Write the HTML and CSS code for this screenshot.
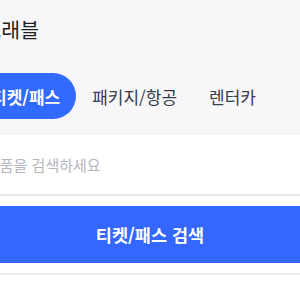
FILE: index.html
```html
<!DOCTYPE html>
<html lang="ko">
<head>
<meta charset="utf-8">
<link rel="stylesheet" href="styles.css">
</head>
<body>
<div class="page">
  <header class="top">
    <h1 class="title">트래블</h1>
    <nav class="tabs">
      <span class="tab active">티켓/패스</span>
      <span class="tab">패키지/항공</span>
      <span class="tab">렌터카</span>
    </nav>
  </header>
  <div class="search">
    <input class="search-input" type="text" placeholder="상품을 검색하세요">
  </div>
  <div class="actions">
    <button class="search-btn" type="button">티켓/패스 검색</button>
  </div>
  <div class="divider"></div>
</div>
</body>
</html>
```

FILE: styles.css
```css
html, body {
  margin: 0;
  padding: 0;
  background: #ffffff;
  overflow: hidden;
}
body {
  width: 300px;
  height: 300px;
  font-family: "Noto Sans CJK KR", "Noto Sans", sans-serif;
}
.page {
  width: 364px;
  margin-left: -32px;
}
.top {
  background: #f7f7f9;
  border-bottom: 1px solid #e8ebf0;
  padding: 17px 0 14px 0;
}
.title {
  margin: 0;
  padding-left: 14.5px;
  font-size: 20.5px;
  line-height: 25px;
  font-weight: 400;
  color: #1f1f1f;
}
.tabs {
  display: flex;
  align-items: center;
  margin-top: 31px;
  padding-left: 7px;
  white-space: nowrap;
}
.tab {
  display: flex;
  align-items: center;
  height: 46px;
  padding: 0 16px;
  font-size: 17px;
  color: #383c44;
  border-radius: 23px;
}
.tab.active {
  background: #306aff;
  color: #ffffff;
  font-weight: 700;
}
.search {
  height: 60px;
  border-bottom: 2px solid #e8e8ec;
  display: flex;
  align-items: center;
}
.search-input {
  border: 0;
  outline: none;
  background: transparent;
  margin-left: 18px;
  padding: 0;
  width: 300px;
  font-family: inherit;
  font-size: 15px;
  color: #222;
}
.search-input::placeholder {
  color: #b3b6bd;
}
.actions {
  padding-top: 10px;
}
.search-btn {
  display: block;
  width: 100%;
  height: 57px;
  border: 0;
  background: #3367ff;
  color: #ffffff;
  font-family: inherit;
  font-size: 17.5px;
  font-weight: 700;
}
.divider {
  margin-top: 10px;
  height: 2px;
  background: #f1edef;
}
```
